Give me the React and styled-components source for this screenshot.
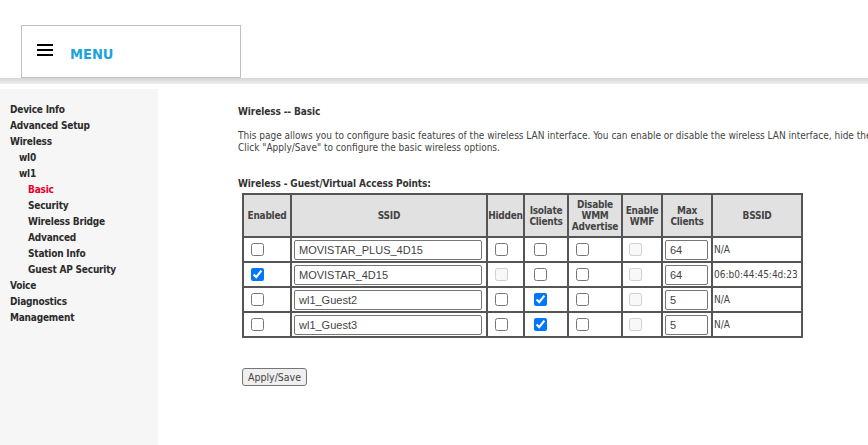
import React from "react";
import styled, { createGlobalStyle } from "styled-components";

const FONT = `"DejaVu Sans Condensed", "DejaVu Sans", Verdana, sans-serif`;

const Global = createGlobalStyle`
  html, body { margin: 0; padding: 0; background: #fff; }
  body { font-family: ${FONT}; font-size: 10px; color: #333; }
`;

const Page = styled.div`
  width: 868px;
  height: 445px;
  overflow: hidden;
  display: flex;
  flex-direction: column;
`;

const Header = styled.header`
  height: 78px;
  padding: 25px 0 0 21px;
  box-sizing: border-box;
`;

const MenuBox = styled.div`
  width: 220px;
  height: 53px;
  box-sizing: border-box;
  border: 1px solid #c0c0c0;
  display: flex;
  align-items: center;
  padding: 3px 0 0 15px;
  gap: 17px;
`;

const Burger = styled.div`
  width: 16px;
  display: flex;
  flex-direction: column;
  gap: 3px;
  margin-top: -7px;
  span { display: block; height: 2px; background: #000; }
`;

const MenuLabel = styled.span`
  color: #1ba3dc;
  font-size: 14.5px;
  font-weight: bold;
  margin-top: 2px;
`;

const Band = styled.div`
  height: 6px;
  background: linear-gradient(#d6d6d6, #ececec);
`;

const Body = styled.div`
  flex: 1;
  display: flex;
  margin-top: 5px;
`;

const Sidebar = styled.nav`
  width: 158px;
  background: #f6f6f6;
  padding-top: 13px;
  box-sizing: border-box;
`;

const NavItem = styled.div`
  height: 16px;
  line-height: 16px;
  padding-left: ${(p) => 10 + p.$level * 9}px;
  font-weight: bold;
  letter-spacing: -0.2px;
  color: ${(p) => (p.$active ? "#e4002b" : "#2b2b2b")};
  white-space: nowrap;
`;

const Main = styled.main`
  flex: 1;
  padding: 16px 0 0 80px;
  min-width: 0;
`;

const Title = styled.div`
  font-weight: bold;
  color: #333;
  line-height: 14px;
  letter-spacing: -0.1px;
`;

const Desc = styled.p`
  margin: 11px 0 0;
  line-height: 12px;
  color: #444;
  white-space: nowrap;
`;

const SubTitle = styled(Title)`
  margin-top: 23px;
`;

const Table = styled.table`
  margin: 2px 0 0 4px;
  border-collapse: separate;
  border-spacing: 0;
  border: 1px solid #555;
  table-layout: fixed;
  width: 559px;
  font-size: 10px;
`;

const Th = styled.th`
  border: 1px solid #555;
  background: #e1e1e1;
  color: #444;
  font-weight: bold;
  height: 41px;
  padding: 0;
  line-height: 11px;
  letter-spacing: -0.25px;
  text-align: center;
`;

const Td = styled.td`
  border: 1px solid #555;
  height: 23px;
  padding: 0 ${(p) => (p.$pad ? 1 : 0)}px;
  color: #444;
  white-space: nowrap;
`;

const Check = styled.input.attrs({ type: "checkbox", readOnly: true })`
  width: 13px;
  height: 13px;
  margin: 0 0 0 ${(p) => p.$ml || 0}px;
  vertical-align: middle;
`;

const TextBox = styled.input.attrs({ readOnly: true })`
  box-sizing: border-box;
  width: ${(p) => p.$w}px;
  height: 20px;
  margin: 0 0 0 2px;
  padding: 0 4px;
  border: 1px solid #767676;
  border-radius: 2px;
  font: 11px/16px "Liberation Sans", Arial, sans-serif;
  color: #444;
  vertical-align: middle;
`;

const Button = styled.button`
  margin: 30px 0 0 4px;
  height: 18px;
  width: 65px;
  padding: 0;
  font: 10.5px ${FONT};
  color: #444;
  background: #efefef;
  border: 1px solid #767676;
  border-radius: 3px;
`;

const nav = [
  ["Device Info", 0],
  ["Advanced Setup", 0],
  ["Wireless", 0],
  ["wl0", 1],
  ["wl1", 1],
  ["Basic", 2, true],
  ["Security", 2],
  ["Wireless Bridge", 2],
  ["Advanced", 2],
  ["Station Info", 2],
  ["Guest AP Security", 2],
  ["Voice", 0],
  ["Diagnostics", 0],
  ["Management", 0],
];

const rows = [
  { en: false, ssid: "MOVISTAR_PLUS_4D15", hidDis: false, iso: false, max: "64", bssid: "N/A" },
  { en: true, ssid: "MOVISTAR_4D15", hidDis: true, iso: false, max: "64", bssid: "06:b0:44:45:4d:23" },
  { en: false, ssid: "wl1_Guest2", hidDis: false, iso: true, max: "5", bssid: "N/A" },
  { en: false, ssid: "wl1_Guest3", hidDis: false, iso: true, max: "5", bssid: "N/A" },
];

const cols = [48, 196, 37, 44, 54, 40, 50, 90];

export default function App() {
  return (
    <Page>
      <Global />
      <Header>
        <MenuBox>
          <Burger>
            <span />
            <span />
            <span />
          </Burger>
          <MenuLabel>MENU</MenuLabel>
        </MenuBox>
      </Header>
      <Band />
      <Body>
        <Sidebar>
          {nav.map(([label, level, active]) => (
            <NavItem key={label} $level={level} $active={active}>
              {label}
            </NavItem>
          ))}
        </Sidebar>
        <Main>
          <Title>Wireless -- Basic</Title>
          <Desc>
            This page allows you to configure basic features of the wireless LAN interface. You can enable or disable the wireless LAN interface, hide the network from active scans, set the wireless network name (also known as SSID) and restrict the channel set based on country requirements.
            <br />
            Click "Apply/Save" to configure the basic wireless options.
          </Desc>
          <SubTitle>Wireless - Guest/Virtual Access Points:</SubTitle>
          <Table>
            <colgroup>
              {cols.map((w, i) => (
                <col key={i} style={{ width: w }} />
              ))}
            </colgroup>
            <thead>
              <tr>
                <Th>Enabled</Th>
                <Th>SSID</Th>
                <Th>Hidden</Th>
                <Th>Isolate<br />Clients</Th>
                <Th>Disable<br />WMM<br />Advertise</Th>
                <Th>Enable<br />WMF</Th>
                <Th>Max<br />Clients</Th>
                <Th>BSSID</Th>
              </tr>
            </thead>
            <tbody>
              {rows.map((r) => (
                <tr key={r.ssid}>
                  <Td><Check $ml={7} checked={r.en} /></Td>
                  <Td><TextBox $w={188} value={r.ssid} /></Td>
                  <Td><Check $ml={7} disabled={r.hidDis} checked={false} /></Td>
                  <Td><Check $ml={9} checked={r.iso} /></Td>
                  <Td><Check $ml={7} checked={false} /></Td>
                  <Td><Check $ml={6} disabled checked={false} /></Td>
                  <Td><TextBox $w={43} value={r.max} /></Td>
                  <Td $pad>{r.bssid}</Td>
                </tr>
              ))}
            </tbody>
          </Table>
          <Button>Apply/Save</Button>
        </Main>
      </Body>
    </Page>
  );
}
